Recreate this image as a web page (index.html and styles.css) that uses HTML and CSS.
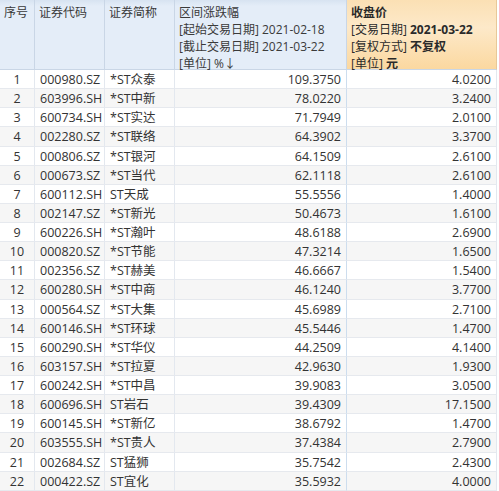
FILE: index.html
```html
<!DOCTYPE html>
<html lang="zh">
<head>
<meta charset="utf-8">
<link rel="stylesheet" href="styles.css">
</head>
<body>
<div class="grid">
  <div class="hd">序号</div>
  <div class="hd">证券代码</div>
  <div class="hd">证券简称</div>
  <div class="hd">区间涨跌幅<br>[起始交易日期] 2021-02-18<br>[截止交易日期] 2021-03-22<br>[单位] %↓</div>
  <div class="hd hl"><b>收盘价</b><br>[交易日期] <b>2021-03-22</b><br>[复权方式] <b>不复权</b><br>[单位] <b>元</b></div>
</div>
<div class="grid body" id="rows"></div>
<script src="app.js"></script>
</body>
</html>
```
FILE: app.js
```js
const data = [
["000980.SZ","*ST众泰","109.3750","4.0200"],
["603996.SH","*ST中新","78.0220","3.2400"],
["600734.SH","*ST实达","71.7949","2.0100"],
["002280.SZ","*ST联络","64.3902","3.3700"],
["000806.SZ","*ST银河","64.1509","2.6100"],
["000673.SZ","*ST当代","62.1118","2.6100"],
["600112.SH","ST天成","55.5556","1.4000"],
["002147.SZ","*ST新光","50.4673","1.6100"],
["600226.SH","*ST瀚叶","48.6188","2.6900"],
["000820.SZ","*ST节能","47.3214","1.6500"],
["002356.SZ","*ST赫美","46.6667","1.5400"],
["600280.SH","*ST中商","46.1240","3.7700"],
["000564.SZ","*ST大集","45.6989","2.7100"],
["600146.SH","*ST环球","45.5446","1.4700"],
["600290.SH","*ST华仪","44.2509","4.1400"],
["603157.SH","*ST拉夏","42.9630","1.9300"],
["600242.SH","*ST中昌","39.9083","3.0500"],
["600696.SH","ST岩石","39.4309","17.1500"],
["600145.SH","*ST新亿","38.6792","1.4700"],
["603555.SH","*ST贵人","37.4384","2.7900"],
["002684.SZ","ST猛狮","35.7542","2.4300"],
["000422.SZ","ST宜化","35.5932","4.0000"]
];
const rows = document.getElementById("rows");
let html = "";
data.forEach((r, i) => {
  const cls = i % 2 ? "c alt" : "c";
  html += `<div class="${cls} ctr">${i + 1}</div>` +
          `<div class="${cls}">${r[0]}</div>` +
          `<div class="${cls}">${r[1]}</div>` +
          `<div class="${cls} num sep">${r[2]}</div>` +
          `<div class="${cls} num">${r[3]}</div>`;
});
rows.innerHTML = html;
```
FILE: styles.css
```css
html, body { margin: 0; padding: 0; background: #fff; }
body {
  font-family: "Open Sans", "Noto Sans CJK SC", sans-serif;
  font-size: 12px;
  color: #333;
  width: 499px;
  height: 491px;
  overflow: hidden;
}
.grid {
  display: grid;
  grid-template-columns: 35px 70px 70px 172px 150px;
  width: 497px;
}
.hd {
  height: 70px;
  box-sizing: border-box;
  padding: 4px 4px 0 4px;
  line-height: 17px;
  background: linear-gradient(#d7e3f1, #e4edf8 6px, #e4edf8);
  border-right: 1px solid #c9d6e6;
  border-bottom: 1px solid #c9d6e6;
  color: #3a3a3a;
  white-space: nowrap;
}
.hd.hl {
  background: linear-gradient(#fbe0b4, #fde9c9 40%, #fbd8a0);
  border-right: 1px solid #e8c898;
  color: #2a2a2a;
}
.hd.hl b { font-weight: 700; }
.body { font-size: 12.5px; }
.c {
  height: 19.14px;
  box-sizing: border-box;
  line-height: 18px;
  padding: 1px 5px 0 5px;
  border-right: 1px solid #e3e8ef;
  border-bottom: 1px solid #e6e9ee;
  white-space: nowrap;
  color: #333;
}
.c.alt { background: #f6f6f6; }
.ctr { text-align: center; }
.num { text-align: right; }
.sep { border-right: 1px solid #cdddee; }
```
